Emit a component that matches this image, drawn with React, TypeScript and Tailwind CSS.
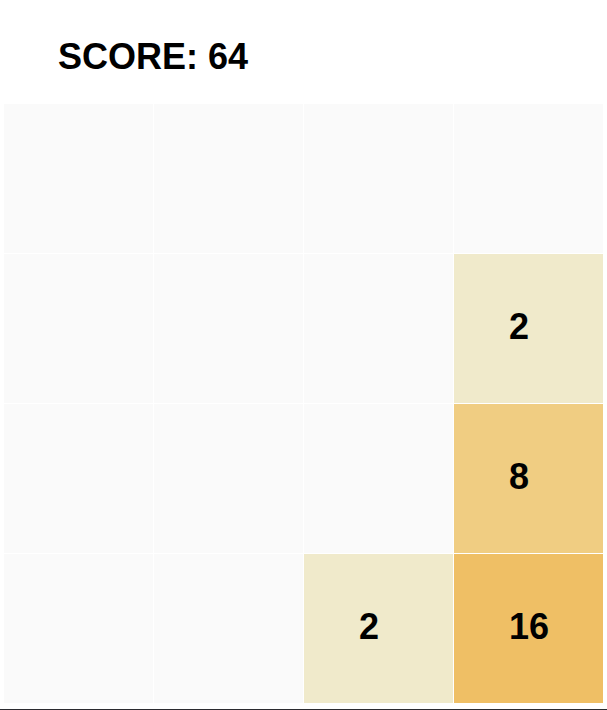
import React from 'react';

const tiles: number[][] = [
    [0, 0, 0, 0],
    [0, 0, 0, 2],
    [0, 0, 0, 8],
    [0, 0, 2, 16],
];

const tileClass = (v: number) => {
    if (v === 2) return 'bg-[#f0eacb]';
    if (v === 8) return 'bg-[#f0cd82]';
    if (v === 16) return 'bg-[#efbf65]';
    return 'bg-[#fafafa]';
};

export default function App() {
    return (
        <div className="w-[607px] h-[710px] bg-white flex flex-col overflow-hidden font-['Liberation_Sans',Arial,sans-serif]">
            <div className="h-[104px] pt-[36px] pl-[58px]">
                <h1 className="text-[36px] font-bold text-black leading-[41px]">SCORE: 64</h1>
            </div>
            <div className="px-[4px] grid grid-cols-[repeat(4,149px)] grid-rows-[repeat(4,149px)] gap-px">
                {tiles.flat().map((v, i) => (
                    <div key={i} className={`flex items-center pl-[55px] pb-[3px] ${tileClass(v)}`}>
                        {v > 0 && <span className="text-[36px] font-bold text-black leading-none">{v}</span>}
                    </div>
                ))}
            </div>
            <div className="mt-[6px] h-px bg-[#2b2b30]" />
        </div>
    );
}
